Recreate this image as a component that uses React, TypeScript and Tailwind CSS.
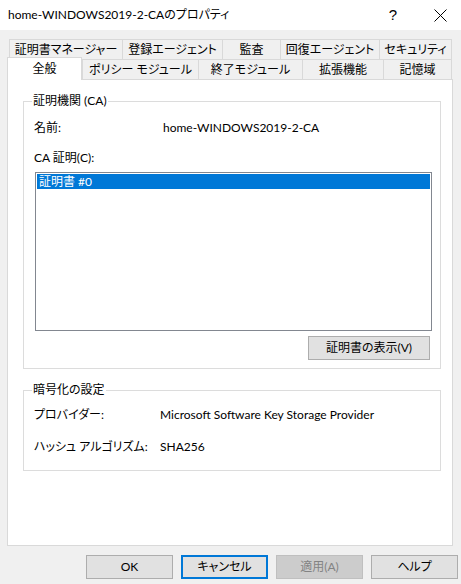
import React from 'react';

const font = "font-['Lato','Noto_Sans_CJK_JP',sans-serif] [font-feature-settings:'palt']";

const topTabs = [
  { label: '証明書マネージャー', w: 'w-[113px]' },
  { label: '登録エージェント', w: 'w-[100px]' },
  { label: '監査', w: 'w-[58px]' },
  { label: '回復エージェント', w: 'w-[99px]' },
  { label: 'セキュリティ', w: 'w-[73px] border-r' },
];

const bottomTabs = [
  { label: 'ポリシー モジュール', w: 'w-[116px]' },
  { label: '終了モジュール', w: 'w-[104px]' },
  { label: '拡張機能', w: 'w-[81px]' },
  { label: '記憶域', w: 'w-[69px] border-r' },
];

const Tab = ({ label, w }: { label: string; w: string }) => (
  <div
    className={`${w} h-[20px] border-t border-l border-[#d9d9d9] bg-[#f0f0f0] flex items-center justify-center text-[12px] text-black`}
  >
    {label}
  </div>
);

const GroupBox = ({
  title,
  className,
  children,
}: {
  title: string;
  className: string;
  children: React.ReactNode;
}) => (
  <div className={`relative border border-[#dcdcdc] ${className}`}>
    {/* 枠線の上に重なるラベル */}
    <span className="absolute left-[8px] -top-[9px] bg-white px-[1px] text-[12px] leading-[16px] text-black">
      {title}
    </span>
    {children}
  </div>
);

const DlgButton = ({
  label,
  variant = 'normal',
}: {
  label: string;
  variant?: 'normal' | 'default' | 'disabled';
}) => {
  const styles = {
    normal: 'border border-[#adadad] bg-[#e1e1e1] text-black',
    default: 'border-2 border-[#0078d7] bg-[#e1e1e1] text-black',
    disabled: 'border border-[#bfbfbf] bg-[#cccccc] text-[#838383]',
  }[variant];
  return (
    <button className={`w-[87px] h-[24px] flex items-center justify-center text-[12px] ${styles}`}>
      {label}
    </button>
  );
};

export default function App() {
  return (
    <div className={`w-[461px] h-[584px] bg-[#f0f0f0] flex flex-col overflow-hidden ${font}`}>
      {/* タイトルバー */}
      <div className="h-[30px] bg-white flex items-center pl-[8px] shrink-0">
        <span className="text-[12px] text-black">home-WINDOWS2019-2-CAのプロパティ</span>
        <span className="ml-auto mr-[37px] text-[15px] text-black font-['Liberation_Sans',sans-serif]">?</span>
        <svg width="13" height="13" viewBox="0 0 13 13" className="mr-[14px]">
          <path d="M0.5 0.5 L12.5 12.5 M12.5 0.5 L0.5 12.5" stroke="#000" strokeWidth="1" fill="none" />
        </svg>
      </div>

      {/* タブ */}
      <div className="mt-[9px] pl-[9px] flex h-[20px]">
        {topTabs.map((t) => (
          <Tab key={t.label} {...t} />
        ))}
      </div>
      <div className="pl-[9px] flex h-[20px]">
        <div className="relative z-10 -ml-[2px] -mt-[2px] w-[75px] h-[23px] shrink-0 border-t border-l border-r border-[#d9d9d9] bg-white flex items-start justify-center pt-[2px] text-[12px] text-black">
          全般
        </div>
        {bottomTabs.map((t) => (
          <Tab key={t.label} {...t} />
        ))}
      </div>

      {/* パネル */}
      <div className="ml-[7px] w-[446px] h-[467px] border border-[#d9d9d9] bg-white flex flex-col text-[12px] text-black">
        <GroupBox title="証明機関 (CA)" className="ml-[15px] mt-[21px] w-[418px] h-[268px]">
          <div className="flex items-center h-[16px] mt-[18px] pl-[10px]">
            <span className="w-[129px]">名前:</span>
            <span>home-WINDOWS2019-2-CA</span>
          </div>
          <div className="flex items-center h-[16px] mt-[14px] pl-[10px]">CA 証明(C):</div>
          <div className="ml-[11px] mt-[6px] w-[397px] h-[159px] border border-[#828790] bg-white p-[1px]">
            <div className="h-[15px] bg-[#0078d7] text-white flex items-center pl-[2px]">証明書 #0</div>
          </div>
          <div className="flex justify-end pr-[10px] mt-[5px]">
            <button className="w-[122px] h-[24px] border border-[#adadad] bg-[#e1e1e1] flex items-center justify-center text-[12px] text-black">
              証明書の表示(V)
            </button>
          </div>
        </GroupBox>

        <GroupBox title="暗号化の設定" className="ml-[15px] mt-[21px] w-[418px] h-[81px]">
          <div className="flex items-center h-[16px] mt-[16px] pl-[10px]">
            <span className="w-[126px]">プロバイダー:</span>
            <span>Microsoft Software Key Storage Provider</span>
          </div>
          <div className="flex items-center h-[16px] mt-[16px] pl-[10px]">
            <span className="w-[126px]">ハッシュ アルゴリズム:</span>
            <span>SHA256</span>
          </div>
        </GroupBox>
      </div>

      {/* ボタン */}
      <div className="flex gap-[8px] pl-[86px] mt-[9px]">
        <DlgButton label="OK" />
        <DlgButton label="キャンセル" variant="default" />
        <DlgButton label="適用(A)" variant="disabled" />
        <DlgButton label="ヘルプ" />
      </div>
    </div>
  );
}
